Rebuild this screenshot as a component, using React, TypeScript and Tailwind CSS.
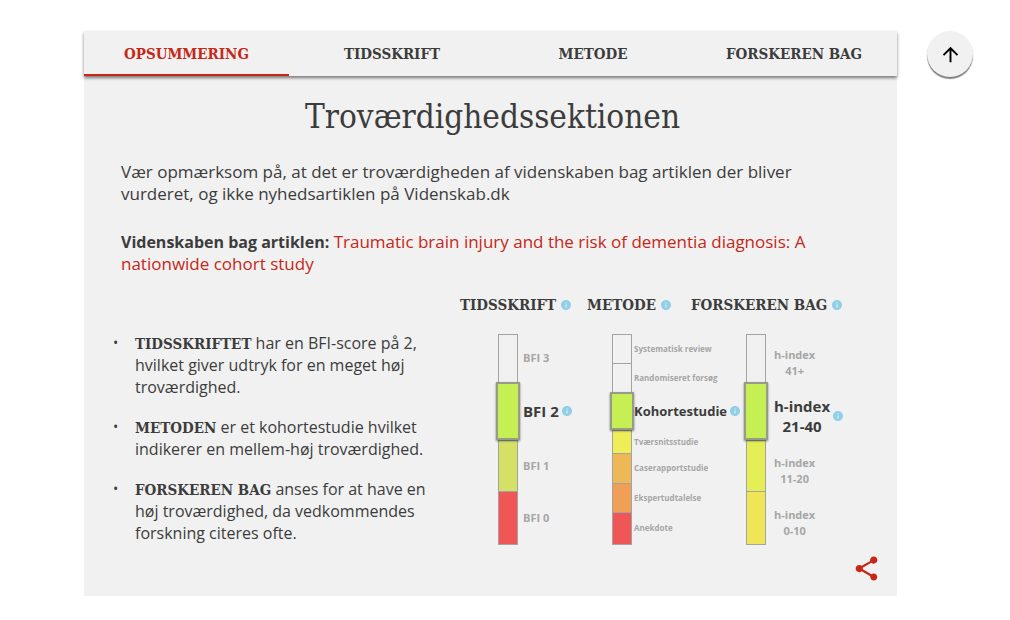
import type { ReactNode } from "react";
import { MdArrowUpward, MdInfo, MdShare } from "react-icons/md";

const SLAB = "font-['Roboto_Slab','DejaVu_Serif_Condensed','DejaVu_Serif',serif]";

function Info({ label }: { label: string }) {
  return (
    <button type="button" aria-label={label} className="shrink-0 text-[#90cfe8]">
      <MdInfo className="size-3" />
    </button>
  );
}

const tabs = ["OPSUMMERING", "TIDSSKRIFT", "METODE", "FORSKEREN BAG"];

function Tabs() {
  return (
    <nav className="grid h-[45px] grid-cols-[205fr_206fr_196fr_206fr] shadow-[0_2px_3px_rgba(0,0,0,0.5)]">
      {tabs.map((tab, i) => (
        <button
          key={tab}
          type="button"
          className={`${SLAB} border-b-2 pt-0.5 text-[15px] font-bold whitespace-nowrap ${
            i === 0 ? "border-[#c62717] text-[#c62717]" : "border-transparent"
          }`}
        >
          {tab}
        </button>
      ))}
    </nav>
  );
}

type Level = { lines: string[]; height: string; fill: string; active?: boolean };

const journal: Level[] = [
  { lines: ["BFI 3"], height: "h-12", fill: "" },
  { lines: ["BFI 2"], height: "h-[58px]", fill: "bg-[#c6ef54]", active: true },
  { lines: ["BFI 1"], height: "h-[51px]", fill: "bg-[#d5e067]" },
  { lines: ["BFI 0"], height: "h-[53px]", fill: "bg-[#f05656]" },
];

const method: Level[] = [
  { lines: ["Systematisk review"], height: "h-[29px]", fill: "" },
  { lines: ["Randomiseret forsøg"], height: "h-[29px]", fill: "" },
  { lines: ["Kohortestudie"], height: "h-[38px]", fill: "bg-[#c6ef54]", active: true },
  { lines: ["Tværsnitsstudie"], height: "h-[23px]", fill: "bg-[#f0ee56]" },
  { lines: ["Caserapportstudie"], height: "h-[30px]", fill: "bg-[#efb856]" },
  { lines: ["Ekspertudtalelse"], height: "h-[29px]", fill: "bg-[#f0a056]" },
  { lines: ["Anekdote"], height: "h-8", fill: "bg-[#f05656]" },
];

const researcher: Level[] = [
  { lines: ["h-index", "41+"], height: "h-12", fill: "" },
  { lines: ["h-index", "21-40"], height: "h-[58px]", fill: "bg-[#c6ef54]", active: true },
  { lines: ["h-index", "11-20"], height: "h-[51px]", fill: "bg-[#e3ef54]" },
  { lines: ["h-index", "0-10"], height: "h-[53px]", fill: "bg-[#f0e556]" },
];

function Scale({ levels, muted, strong, label }: { levels: Level[]; muted: string; strong: string; label: string }) {
  return (
    <ul>
      {levels.map(({ lines, height, fill, active }) => (
        <li key={lines.join(" ")} className={`flex items-center ${height}`}>
          <span className="flex h-full w-6 shrink-0 justify-center">
            <span
              className={
                active
                  ? `z-10 w-full border-2 border-[#969c8c] shadow-[0_1px_2px_rgba(0,0,0,0.5)] ${fill}`
                  : `-mb-px w-5 border border-[#a3a3a3] ${fill}`
              }
            />
          </span>
          <span className={`flex items-center gap-0.5 whitespace-nowrap ${label}`}>
            <span className={`text-center font-bold ${active ? strong : `text-[#a6a6a6] ${muted}`}`}>
              {lines.map((line) => (
                <span key={line} className="block">
                  {line}
                </span>
              ))}
            </span>
            {active && <Info label={`Om ${lines.join(" ")}`} />}
          </span>
        </li>
      ))}
    </ul>
  );
}

function Heading({ children }: { children: string }) {
  return (
    <h2 className={`${SLAB} flex items-center gap-1 text-[15px] leading-6 font-bold whitespace-nowrap`}>
      {children}
      <Info label={`Om ${children.toLowerCase()}`} />
    </h2>
  );
}

function Point({ term, children }: { term: string; children: ReactNode }) {
  return (
    <li className="flex">
      <span aria-hidden="true" className="w-[22px] shrink-0 text-sm leading-[22px]">
        •
      </span>
      <p>
        <strong className={`${SLAB} text-[15px] leading-none`}>{term}</strong> {children}
      </p>
    </li>
  );
}

export default function App() {
  return (
    <div className="flex items-start gap-[30px] bg-white pt-[31px] pr-[37px] pb-6 pl-[84px] font-['Open_Sans',sans-serif] text-base leading-[22px] text-[#3c3c3c]">
      <main className="min-w-0 flex-1 bg-[#f1f1f1]">
        <Tabs />
        <h1 className={`${SLAB} pt-[21px] pl-1 text-center text-[33px] leading-10`}>Troværdighedssektionen</h1>

        <div className="flex flex-col gap-[26px] pt-6 pr-[72px] pl-[37px] text-[17px] leading-[22px]">
          <p>
            Vær opmærksom på, at det er troværdigheden af videnskaben bag artiklen der bliver vurderet, og ikke
            nyhedsartiklen på Videnskab.dk
          </p>
          <p>
            <strong className="text-base leading-none">Videnskaben bag artiklen:</strong>{" "}
            <a href="#studie" className="text-[#c62717]">
              Traumatic brain injury and the risk of dementia diagnosis: A nationwide cohort study
            </a>
          </p>
        </div>

        <section className="flex pt-[18px] pr-10 pl-[29px]">
          <ul className="flex min-w-0 flex-1 flex-col gap-[18px] pt-[39px] pr-3">
            <Point term="TIDSSKRIFTET">har en BFI-score på 2, hvilket giver udtryk for en meget høj troværdighed.</Point>
            <Point term="METODEN">er et kohortestudie hvilket indikerer en mellem-høj troværdighed.</Point>
            <Point term="FORSKEREN BAG">
              anses for at have en høj troværdighed, da vedkommendes forskning citeres ofte.
            </Point>
          </ul>

          <div className="w-[397px] shrink-0">
            <div className="grid grid-cols-[127px_104px_1fr]">
              <Heading>TIDSSKRIFT</Heading>
              <Heading>METODE</Heading>
              <Heading>FORSKEREN BAG</Heading>
            </div>
            <div className="grid grid-cols-[114px_134px_1fr] pt-[17px] pl-9">
              <Scale levels={journal} muted="text-[11px]" strong="text-[15px]" label="pl-[3px]" />
              <Scale levels={method} muted="text-[8px]" strong="text-[13px]" label="" />
              <Scale
                levels={researcher}
                muted="text-[11px] leading-4"
                strong="text-[15px] leading-5"
                label="pl-1.5 pt-2.5"
              />
            </div>
          </div>
        </section>

        <footer className="flex justify-end pt-2.5 pr-4 pb-[13px]">
          <button type="button" aria-label="Del" className="text-[#c62717]">
            <MdShare className="size-[29px]" />
          </button>
        </footer>
      </main>

      <button
        type="button"
        aria-label="Til toppen"
        className="flex size-[46px] shrink-0 items-center justify-center rounded-full bg-[#f1f1f1] text-black shadow-[0_2px_1px_rgba(0,0,0,0.5)]"
      >
        <MdArrowUpward className="size-[23px]" />
      </button>
    </div>
  );
}
